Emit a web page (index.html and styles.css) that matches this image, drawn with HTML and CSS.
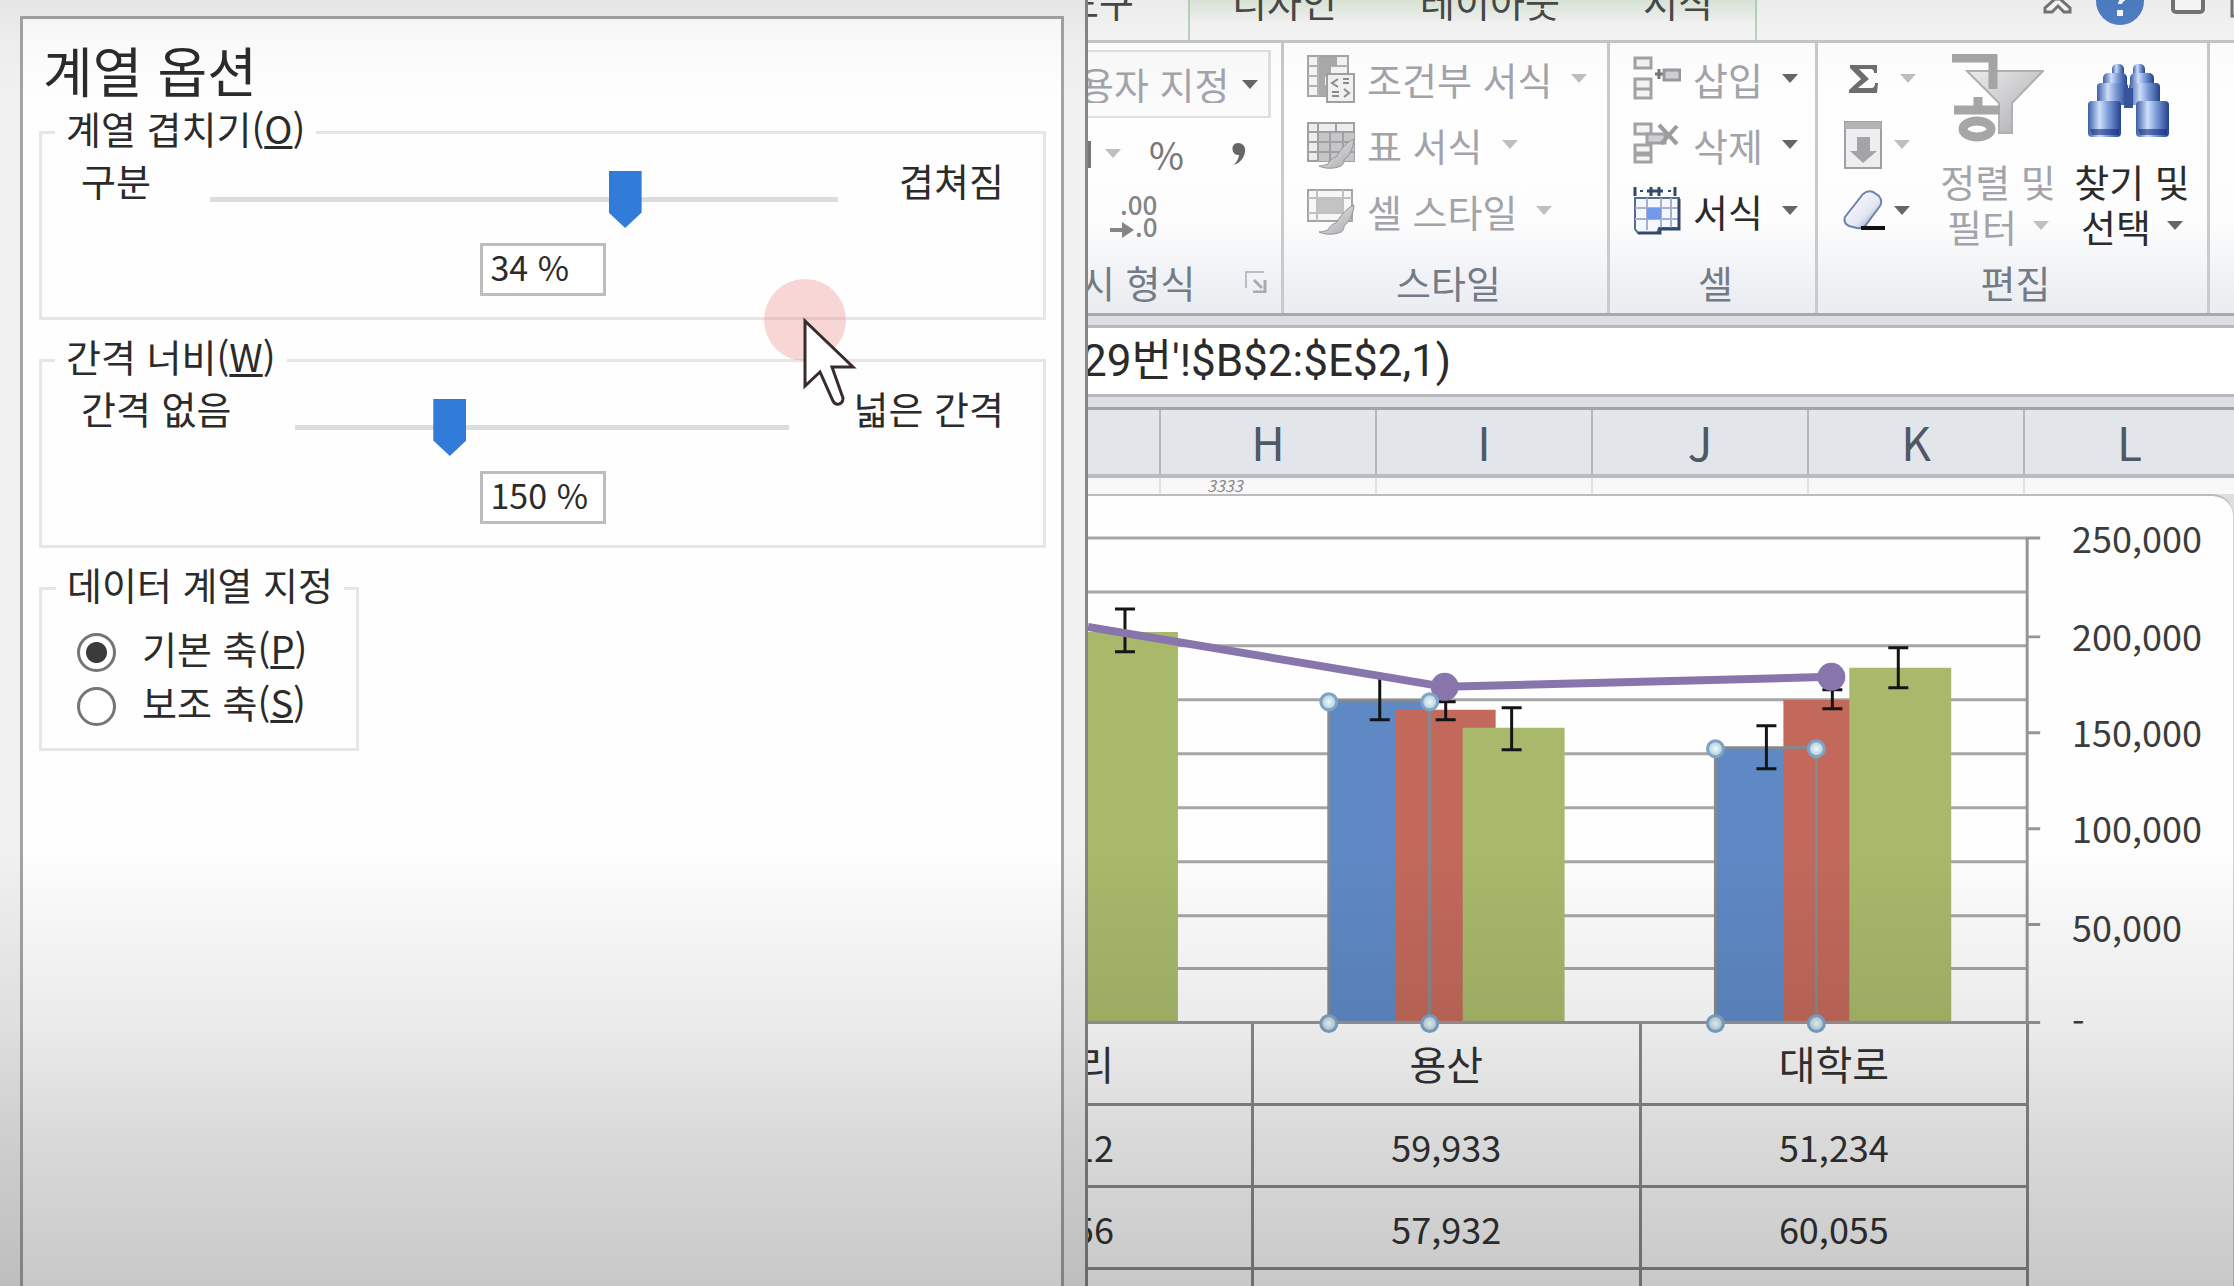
FILE: index.html
```html
<!DOCTYPE html>
<html lang="ko">
<head>
<meta charset="utf-8">
<title>데이터 계열 서식</title>
<link rel="stylesheet" href="styles.css">
</head>
<body>
<svg class="defs" aria-hidden="true">
  <defs>
    <linearGradient id="steel" x1="0" x2="1" y1="0" y2="0"><stop offset="0" stop-color="#3a5ea6"/><stop offset=".35" stop-color="#cfdffa"/><stop offset=".6" stop-color="#7f9fdb"/><stop offset="1" stop-color="#24428c"/></linearGradient>
    <linearGradient id="grey" x1="0" x2="1" y1="0" y2="1"><stop offset="0" stop-color="#efeff0"/><stop offset="1" stop-color="#a9a9ac"/></linearGradient>
    <linearGradient id="rubber" x1="0" x2="1" y1="0" y2="1"><stop offset="0" stop-color="#ffffff"/><stop offset=".6" stop-color="#e4e7f2"/><stop offset="1" stop-color="#6d82ac"/></linearGradient>
    <radialGradient id="bead"><stop offset="0" stop-color="#f0fafc"/><stop offset="1" stop-color="#a9cbd8"/></radialGradient>
    <symbol id="arrow" viewBox="0 0 16 10"><path d="M0 0h16L8 9z" fill="currentColor"/></symbol>
    <symbol id="brush" viewBox="0 0 48 48"><path d="M47 18c-6 2-13 10-18 18-4 1-6 3-8 7-3 1-6 2-9 2 6 3 15 3 22 0 3-2 3-4 3-6 5-4 9-10 10-21z" fill="url(#grey)" stroke="#949497" stroke-width="1"/></symbol>
  </defs>
</svg>
<main class="screen">
  <section class="dialog" aria-label="데이터 계열 서식">
    <form class="panel">
      <h1 class="title">계열 옵션</h1>
      <fieldset class="group">
        <legend>계열 겹치기(<u>O</u>)</legend>
        <div class="range range-overlap">
          <label for="overlap">구분</label>
          <input id="overlap" type="range" min="-100" max="100" value="34">
          <span class="range-end">겹쳐짐</span>
        </div>
        <input class="value" type="text" value="34 %" aria-label="계열 겹치기 값">
      </fieldset>
      <fieldset class="group">
        <legend>간격 너비(<u>W</u>)</legend>
        <div class="range range-gap">
          <label for="gap">간격 없음</label>
          <input id="gap" type="range" min="0" max="500" value="150">
          <span class="range-end">넓은 간격</span>
        </div>
        <input class="value" type="text" value="150 %" aria-label="간격 너비 값">
      </fieldset>
      <fieldset class="group group-axis">
        <legend>데이터 계열 지정</legend>
        <label class="choice"><input type="radio" name="axis" checked><span>기본 축(<u>P</u>)</span></label>
        <label class="choice"><input type="radio" name="axis"><span>보조 축(<u>S</u>)</span></label>
      </fieldset>
    </form>
    <svg class="pointer" viewBox="0 0 96 130" aria-hidden="true">
      <circle cx="42" cy="42" r="41" fill="#ee8a8a" fill-opacity=".34"/>
      <path d="M42 43v65l15-14 13 29q2 4 6 3t4-6L69 89h21z" fill="#fff" stroke="#3a2c2c" stroke-width="3"/>
    </svg>
  </section>

  <section class="excel">
    <nav class="tabs">
      <a class="tab tab-cut" href="#tools">도구</a>
      <div class="context-tabs">
        <a class="tab" href="#design">디자인</a>
        <a class="tab" href="#layout">레이아웃</a>
        <a class="tab" href="#format">서식</a>
      </div>
      <svg class="window-icons" viewBox="0 0 192 26" aria-hidden="true">
        <path d="M3 12V8l10-9h5l10 9v4h-6l-6-6-6 6z" fill="#fff" stroke="#777" stroke-width="3"/>
        <circle cx="78" cy="1" r="24" fill="#4f80c8"/><path d="M72-4c1-6 13-5 11 1-1 3-5 3-5 7" fill="none" stroke="#fff" stroke-width="4"/><rect x="75" y="10" width="6" height="6" fill="#fff"/>
        <rect x="131" y="-8" width="30" height="20" rx="3" fill="#fff" stroke="#777" stroke-width="4"/>
        <rect x="190" y="-8" width="20" height="24" fill="#fff" stroke="#777" stroke-width="3"/>
      </svg>
    </nav>

    <div class="ribbon">
      <div class="ribbon-group number-group">
        <div class="commands">
          <div class="combo">
            <select aria-label="표시 형식"><option>사용자 지정</option></select>
            <svg class="arrow combo-arrow"><use href="#arrow"/></svg>
          </div>
          <div class="number-row">
            <i class="sliver"></i>
            <svg class="arrow dim"><use href="#arrow"/></svg>
            <button class="percent" type="button">%</button>
            <button class="comma" type="button" aria-label="쉼표 스타일"><svg viewBox="0 0 14 24" width="14" height="24"><path d="M6 1c5 0 8 4 7 9-1 6-5 11-11 13 3-4 5-7 5-10-8 1-9-12-1-12z" fill="#666"/></svg></button>
          </div>
          <button class="decimal" type="button" aria-label="자릿수 줄임"><svg viewBox="0 0 50 44" width="50" height="44"><text x="12" y="20">.00</text><text x="27" y="42">.0</text><path d="M2 33h12v-6l12 8-12 8v-6H2z" fill="#858585"/></svg></button>
        </div>
        <footer class="group-name number-name"><span>시 형식</span>
          <svg viewBox="0 0 22 22" width="22" height="22"><path d="M1 17V1h18" fill="none" stroke="#b9bcc2" stroke-width="2"/><path d="M9 9l8 8M20 9v12H8" fill="none" stroke="#a8abb2" stroke-width="3"/></svg></footer>
      </div>

      <div class="ribbon-group">
        <div class="commands commands-wide">
          <button class="command off" type="button">
            <svg viewBox="0 0 48 48" width="48" height="48"><path d="M1 1h40v40H1z" fill="#f4f4f5" stroke="#a5a5a8" stroke-width="2"/><path d="M1 11h40M1 21h40M1 31h40M11 1v40" stroke="#b4b4b7" stroke-width="2"/><path d="M12 2h18v9h-6v9h-6v10h6v10H12z" fill="#aaaaad"/><path d="M20 19h27v28H20z" fill="#f1f1f2" stroke="#a0a0a3" stroke-width="2"/><path d="M31 24l-6 4 6 4M42 24h-6M36 28h6M25 37h7M25 41h7M37 34l5 4-5 4" fill="none" stroke="#8c8c90" stroke-width="2"/></svg>
            <span>조건부 서식</span><svg class="arrow dim"><use href="#arrow"/></svg></button>
          <button class="command off" type="button">
            <svg viewBox="0 0 48 48" width="48" height="48"><path d="M1 2h46v38H1z" fill="#ededee" stroke="#a0a0a3" stroke-width="2"/><path d="M11 12h36v28H11z" fill="#c6c6c9"/><path d="M1 11h46M1 21h46M1 31h46M11 2v38M29 2v9M23 11v29M36 11v29" stroke="#a0a0a3" stroke-width="2"/><use href="#brush"/></svg>
            <span>표 서식</span><svg class="arrow dim"><use href="#arrow"/></svg></button>
          <button class="command off" type="button">
            <svg viewBox="0 0 48 48" width="48" height="48"><path d="M1 3h44v31H1z" fill="#f6f6f7" stroke="#a5a5a8" stroke-width="2"/><path d="M1 11h44M1 26h44M10 3v31M36 3v31" stroke="#c0c0c3" stroke-width="2"/><path d="M11 12h24v13H11z" fill="#c3c3c6"/><use href="#brush"/></svg>
            <span>셀 스타일</span><svg class="arrow dim"><use href="#arrow"/></svg></button>
        </div>
        <footer class="group-name">스타일</footer>
      </div>

      <div class="ribbon-group">
        <div class="commands commands-wide">
          <button class="command off" type="button">
            <svg viewBox="0 0 48 48" width="48" height="48"><path d="M2 3h16v10H2zM2 24h16v10H2zM2 34h16v9H2z" fill="#f4f4f5" stroke="#a2a2a5" stroke-width="3"/><path d="M22 19h9M26 14v10" stroke="#77777a" stroke-width="3"/><path d="M31 15h16v10H31z" fill="#d0d0d3" stroke="#9a9a9d" stroke-width="3"/></svg>
            <span>삽입</span><svg class="arrow"><use href="#arrow"/></svg></button>
          <button class="command off" type="button">
            <svg viewBox="0 0 48 48" width="48" height="48"><path d="M2 3h16v10H2zM2 24h16v10H2zM2 32h16v9H2z" fill="#f4f4f5" stroke="#a2a2a5" stroke-width="3"/><path d="M14 13h18v9H14z" fill="#cfcfd2" stroke="#a2a2a5" stroke-width="3"/><path d="M26 4l18 19M44 5L28 23" stroke="#9c9c9f" stroke-width="4"/></svg>
            <span>삭제</span><svg class="arrow"><use href="#arrow"/></svg></button>
          <button class="command" type="button">
            <svg viewBox="0 0 48 48" width="48" height="48"><path d="M2 0v9M42 0v9M18 0v9M26 0v9M14 4h16" stroke="#33486a" stroke-width="3"/><path d="M7 4h3M35 4h3" stroke="#33486a" stroke-width="2"/><path d="M2 11h44v30H26l-2 5H5l-3-4z" fill="#f5f8fe" stroke="#546d94" stroke-width="2"/><path d="M2 21h44M2 32h44M14 11v32M28 11v31M38 11v30" stroke="#a4b1c8" stroke-width="2"/><path d="M14 21h14v11H14z" fill="#7298ea"/><path d="M46 12v30H27v4H5" fill="none" stroke="#33486a" stroke-width="3"/></svg>
            <span>서식</span><svg class="arrow"><use href="#arrow"/></svg></button>
        </div>
        <footer class="group-name">셀</footer>
      </div>

      <div class="ribbon-group edit-group">
        <div class="edit-body">
          <div class="commands edit-small">
            <button class="command" type="button" aria-label="합계"><svg viewBox="0 0 42 48" width="42" height="48"><path d="M7 10h27v8h-3c0-3-1-4-4-4H16l10 10-11 9h13c3 0 4-2 4-5h3l-1 10H6v-3l12-11L7 13z" fill="#6e6e70"/></svg><svg class="arrow dim"><use href="#arrow"/></svg></button>
            <button class="command" type="button" aria-label="채우기"><svg viewBox="0 0 42 48" width="42" height="48"><path d="M2 1h36v46H2z" fill="#eeeef0" stroke="#a0a0a3" stroke-width="2"/><path d="M2 1h36v7H2z" fill="#b4b4b7"/><path d="M14 16h13v14h7L20 42 7 30h7z" fill="#a4a4a7"/></svg><svg class="arrow dim"><use href="#arrow"/></svg></button>
            <button class="command" type="button" aria-label="지우기"><svg viewBox="0 0 42 48" width="42" height="48"><path d="M2 30L20 7q5-4 10-2l6 4q4 5 1 10L22 39q-3 3-8 2l-8-2q-6-3-4-9z" fill="url(#rubber)" stroke="#6d82ac" stroke-width="2"/><path d="M18 41h24" stroke="#111" stroke-width="4"/></svg><svg class="arrow"><use href="#arrow"/></svg></button>
          </div>
          <button class="big off" type="button">
            <svg viewBox="0 0 92 92" width="92" height="92"><path d="M15 17h76L60 49v30H47V49z" fill="url(#grey)" stroke="#b0b0b3" stroke-width="2"/><path d="M0 4h41v31" fill="none" stroke="#a6a6a8" stroke-width="9"/><path d="M2 56h46M26 43v9" stroke="#a6a6a8" stroke-width="9"/><ellipse cx="25" cy="75" rx="14" ry="8" fill="#fff" stroke="#a6a6a8" stroke-width="9"/></svg>
            <span>정렬 및</span><span class="with-arrow">필터<svg class="arrow dim"><use href="#arrow"/></svg></span></button>
          <button class="big" type="button">
            <svg viewBox="0 0 90 92" width="90" height="92"><g fill="url(#steel)"><rect x="25" y="10" width="12" height="15" rx="5"/><rect x="46" y="10" width="12" height="15" rx="5"/><rect x="16" y="19" width="24" height="16" rx="5"/><rect x="43" y="19" width="24" height="16" rx="5"/><rect x="10" y="29" width="31" height="22" rx="4"/><rect x="42" y="29" width="31" height="22" rx="4"/><rect x="1" y="47" width="33" height="36" rx="4"/><rect x="49" y="47" width="33" height="36" rx="4"/></g><rect x="37" y="34" width="9" height="20" fill="#35549b"/><path d="M3 75h29v6H5zM51 75h29v6H53z" fill="#122d78" fill-opacity=".6"/></svg>
            <span>찾기 및</span><span class="with-arrow">선택<svg class="arrow"><use href="#arrow"/></svg></span></button>
        </div>
        <footer class="group-name">편집</footer>
      </div>
      <div class="ribbon-rest"></div>
    </div>

    <div class="formula"><span>29번'!$B$2:$E$2,1)</span></div>

    <div class="columns heads"><span></span><span>H</span><span>I</span><span>J</span><span>K</span><span>L</span></div>
    <div class="columns cells"><span></span><span>3333</span><span></span><span></span><span></span><span></span></div>

    <div class="chart">
      <svg class="plot" viewBox="0 0 1146 527" role="img" aria-label="차트">
        <g transform="translate(-1088 -495)">
          <path class="grid" d="M1088 537h940M1088 591h940M1088 645h940M1088 699h940M1088 753h940M1088 807h940M1088 861h940M1088 915h940M1088 968h940"/>
          <path class="axis" d="M2028 536v487M2028 537h13M2028 636h13M2028 732h13M2028 828h13M2028 924h13M2028 1022h13"/>
          <g class="blue"><path d="M1329 700h101v322h-101zM1716 747h101v275h-101z"/></g>
          <g class="red"><path d="M1396 709h100v313h-100zM1784 699h100v323h-100z"/></g>
          <g class="green"><path d="M1088 631h90v391h-90zM1463 727h102v295h-102zM1850 667h102v355h-102z"/></g>
          <path class="axis" d="M1088 1022h940"/>
          <path class="select" d="M1329 1022V700h101v322M1716 1022V747h101v275"/>
          <path class="error" d="M1115 608h20M1125 608v43M1115 651h20M1380 674v45M1370 719h20M1436 701h20M1446 701v18M1436 719h20M1502 707h20M1512 707v42M1502 749h20M1757 725h20M1767 725v43M1757 768h20M1823 689h20M1833 689v19M1823 708h20M1889 647h20M1899 647v40M1889 687h20"/>
          <path class="trend" d="M1088 626L1445 686L1832 676"/>
          <circle class="marker" cx="1445" cy="686" r="14"/><circle class="marker" cx="1832" cy="676" r="14"/>
          <g class="handle"><circle cx="1329" cy="701" r="8"/><circle cx="1430" cy="701" r="8"/><circle cx="1329" cy="1023" r="8"/><circle cx="1430" cy="1023" r="8"/><circle cx="1716" cy="748" r="8"/><circle cx="1817" cy="748" r="8"/><circle cx="1716" cy="1023" r="8"/><circle cx="1817" cy="1023" r="8"/></g>
          <g class="scale"><text x="2073" y="552">250,000</text><text x="2073" y="650">200,000</text><text x="2073" y="746">150,000</text><text x="2073" y="842">100,000</text><text x="2073" y="941">50,000</text><text x="2073" y="1035">-</text></g>
        </g>
      </svg>
      <table class="data">
        <thead><tr><th class="cut">리</th><th>용산</th><th>대학로</th></tr></thead>
        <tbody>
          <tr><td class="cut">12</td><td>59,933</td><td>51,234</td></tr>
          <tr><td class="cut">56</td><td>57,932</td><td>60,055</td></tr>
          <tr><td></td><td></td><td></td></tr>
        </tbody>
      </table>
    </div>
  </section>
  <div class="shade"></div>
</main>
</body>
</html>
```
FILE: styles.css
```css
* { box-sizing: border-box; }

body {
  margin: 0;
  font-family: "Noto Sans CJK KR", sans-serif;
  font-size: 38px;
  line-height: 38px;
  color: #2b2b2b;
}

button, input, select {
  font: inherit;
  color: inherit;
  margin: 0;
}

button {
  border: 0;
  padding: 0;
  background: none;
}

.defs { position: absolute; width: 0; height: 0; }

.screen {
  position: relative;
  display: grid;
  grid-template-columns: 1088fr 1146fr;
  height: 100vh;
  overflow: hidden;
  background: #fff;
}

.shade {
  position: absolute;
  inset: 0;
  pointer-events: none;
  z-index: 3;
  background: linear-gradient(to bottom,
    rgba(0, 0, 0, .05) 0, rgba(0, 0, 0, .02) 3%, transparent 8%,
    transparent 66%, rgba(0, 0, 0, .03) 71%, rgba(0, 0, 0, .08) 80%,
    rgba(0, 0, 0, .14) 88%, rgba(0, 0, 0, .21) 100%);
}

/* Dialog */
.dialog {
  position: relative;
  display: flex;
  min-width: 0;
  padding: 16px 21px 0 20px;
  background: #f1f1f2;
  border-right: 3px solid #85868a;
}

.panel {
  flex: 1;
  min-width: 0;
  padding: 24px 15px 0 16px;
  background: #fefefe;
  border: 3px solid #a3a4a6;
  border-bottom: 0;
}

.title {
  margin: 0 0 12px 4px;
  font-size: 54px;
  line-height: 54px;
  font-weight: 400;
}

.group {
  min-width: 0;
  margin: 0 0 17px;
  padding: 4px 39px 21px 39px;
  border: 3px solid #e6e6e6;
}

legend {
  margin-left: -26px;
  padding: 0 11px 8px;
}

.range { display: grid; align-items: start; line-height: 42px; }
.range-overlap { grid-template-columns: 129px 1fr 166px; }
.range-gap { grid-template-columns: 214px 1fr 215px; }
.range-end { text-align: right; }

input[type="range"] {
  appearance: none;
  width: 100%;
  height: 57px;
  margin-top: 12px;
  background: linear-gradient(#dcdcdc, #dcdcdc) center / 100% 5px no-repeat;
}

input[type="range"]::-webkit-slider-thumb {
  appearance: none;
  width: 33px;
  height: 57px;
  background: #317cd8;
  clip-path: polygon(0 0, 100% 0, 100% 73%, 50% 100%, 0 73%);
}

.value {
  display: block;
  width: 126px;
  height: 53px;
  margin: 15px auto 0;
  padding: 0 8px 6px;
  border: 3px solid #bdbdbd;
  background: #fff;
  font-size: 34px;
}

.group-axis {
  width: 320px;
  padding: 14px 0 15px 35px;
}

.group-axis legend { margin-left: -21px; white-space: nowrap; }

.choice {
  display: flex;
  align-items: center;
  gap: 26px;
  height: 54px;
}

.choice span { padding-bottom: 8px; }

input[type="radio"] {
  appearance: none;
  width: 39px;
  height: 39px;
  border: 3px solid #757575;
  border-radius: 50%;
  background: #fff;
}

input[type="radio"]:checked {
  background: radial-gradient(circle, #3b3b3b 10px, #fff 11px);
}

.pointer {
  position: absolute;
  left: 763px;
  top: 278px;
  width: 96px;
  height: 130px;
}

/* Tabs */
.excel {
  display: flex;
  flex-direction: column;
  min-width: 0;
  overflow: hidden;
  background: #dcdee4;
}

.tabs {
  display: grid;
  grid-template-columns: minmax(0, 100fr) minmax(0, 569fr) minmax(0, 285fr) minmax(0, 192fr);
  grid-template-rows: 100%;
  flex: none;
  height: 43px;
  border-bottom: 3px solid #c6c7c9;
  background: #f8f8f8;
  overflow: hidden;
}

.tab {
  align-self: end;
  padding-bottom: 20px;
  color: #4a4a4a;
  text-decoration: none;
  white-space: nowrap;
}

.tab-cut { justify-self: end; padding-right: 54px; }

.context-tabs {
  display: flex;
  justify-content: space-between;
  padding: 0 42px;
  border: solid #b9d8bb;
  border-width: 0 2px;
  background: linear-gradient(#e2eee0, #f8f8f8 60%);
}

.window-icons { grid-column: 4; width: 100%; height: 26px; }

/* Ribbon */
.ribbon {
  display: grid;
  grid-template-columns: 196fr 326fr 208fr 392fr 24fr;
  flex: none;
  height: 273px;
  border-bottom: 3px solid #a6a9af;
  background: linear-gradient(#fff 0, #fdfdfd 65%, #f1f3f6 85%, #e9ecf0 100%);
}

.ribbon-group {
  display: flex;
  flex-direction: column;
  min-width: 0;
  padding-top: 3px;
  border-right: 3px solid #c8cacf;
}

.commands { display: grid; grid-template-rows: repeat(3, 66px); }
.commands-wide { padding-left: 23px; }

.command {
  display: flex;
  align-items: center;
  gap: 12px;
  text-align: left;
  white-space: nowrap;
}

.off { color: #a3a4a9; }
.command .arrow { margin-left: 7px; }
.arrow { flex: none; width: 16px; height: 10px; color: #666; }
.arrow.dim { color: #bebfc2; }

.group-name {
  margin-top: 18px;
  padding-left: 6px;
  line-height: 40px;
  text-align: center;
  color: #747b87;
}

.number-group .commands { grid-template-rows: 72px 72px 54px; overflow: hidden; }

.combo {
  position: relative;
  width: 183px;
  height: 68px;
  margin-top: 4px;
  border: solid #dfe0e3;
  border-width: 2px 3px 2px 0;
  overflow: hidden;
}

.combo select {
  appearance: none;
  width: 240px;
  height: 64px;
  margin-left: -52px;
  padding: 0 0 0 8px;
  border: 0;
  background: #fbfbfb;
  color: #a3a4a9;
  opacity: 1;
}

.combo-arrow { position: absolute; right: 10px; top: 28px; }
.number-row { display: flex; align-items: center; }
.sliver { width: 3px; height: 27px; margin-right: 14px; background: #777; }
.percent { margin: 0 48px 0 28px; color: #777; }
.comma svg, .decimal svg { display: block; }
.decimal { justify-self: start; align-self: center; margin-left: 20px; }
.decimal text { font-size: 26px; font-weight: 500; fill: #858585; }

.number-name {
  display: flex;
  align-items: center;
  justify-content: space-between;
  padding: 0 14px 0 0;
}
.number-name span { margin-left: -8px; }

.edit-body { display: grid; grid-template-columns: 113px 134px 134px; height: 198px; }
.edit-small { padding-left: 25px; }
.edit-small .command { gap: 2px; }
.edit-small .command:first-child { gap: 8px; }

.big {
  display: flex;
  flex-direction: column;
  align-items: center;
  line-height: 45px;
  padding-top: 8px;
  white-space: nowrap;
}
.big > svg { display: block; flex: none; margin-bottom: 12px; }
.with-arrow { display: flex; align-items: center; gap: 16px; }

/* Formula bar and column headings */
.formula {
  flex: none;
  height: 72px;
  margin-top: 9px;
  border: solid #b7b9be;
  border-width: 3px 0;
  background: #fff;
  font-family: Roboto, "Noto Sans CJK KR", sans-serif;
  font-size: 44px;
  line-height: 66px;
  white-space: nowrap;
  overflow: hidden;
}

.formula span { margin-left: -6px; }

.columns { display: grid; grid-template-columns: 71fr 216fr 216fr 216fr 216fr 211fr; flex: none; }

.heads {
  height: 71px;
  margin-top: 10px;
  border-top: 3px solid #a2a4a8;
  border-bottom: 4px solid #b8bbc1;
  background: #e2e5ea;
  font-size: 46px;
  line-height: 62px;
  text-align: center;
  color: #505866;
}

.heads span + span { border-left: 2px solid #b3b6bc; }

.cells {
  height: 16px;
  background: #f8f8f8;
  font-size: 16px;
  line-height: 14px;
  font-style: italic;
  color: #888;
  overflow: hidden;
}

.cells span + span { border-left: 2px solid #e2e2e2; padding-left: 46px; }

/* Chart */
.chart {
  flex: 1 0 auto;
  border-top: 2px solid #bcbcbc;
  border-right: 1px solid #d0d0d0;
  border-top-right-radius: 22px;
  background: #fefefe;
}

.plot { position: relative; z-index: 1; display: block; width: 100%; overflow: visible; }
.grid { stroke: #a6a6a6; stroke-width: 3; }
.axis { stroke: #969696; stroke-width: 3; }
.blue { fill: #5f89c5; }
.red { fill: #c2695b; }
.green { fill: #a8b96b; }
.select { fill: none; stroke: #858a90; stroke-width: 3; }
.error { stroke: #151515; stroke-width: 3; }
.trend { fill: none; stroke: #8775ac; stroke-width: 8; }
.marker { fill: #8775ac; }
.handle { fill: url(#bead); stroke: #7fa3c4; stroke-width: 3; }
.scale { font-size: 36px; fill: #3c3c3c; }

.data {
  width: 82.2%;
  table-layout: fixed;
  border-collapse: collapse;
  font-size: 36px;
  text-align: center;
  color: #333;
}

.data th, .data td {
  height: 82px;
  padding: 0;
  border: solid #8b8b8b;
  border-width: 3px 3px 3px 0;
}

.data thead th { border-top: 0; font-size: 40px; font-weight: 400; }
.data th:first-child { width: 17.5%; }
.data .cut { padding-right: 137px; direction: rtl; white-space: nowrap; }
```
